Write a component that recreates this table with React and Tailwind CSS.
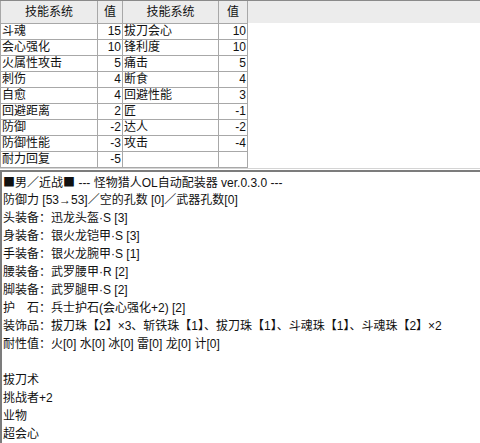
import React from "react";

const skills = [
  ["斗魂", "15", "拔刀会心", "10"],
  ["会心强化", "10", "锋利度", "10"],
  ["火属性攻击", "5", "痛击", "5"],
  ["刺伤", "4", "断食", "4"],
  ["自愈", "4", "回避性能", "3"],
  ["回避距离", "2", "匠", "-1"],
  ["防御", "-2", "达人", "-2"],
  ["防御性能", "-3", "攻击", "-4"],
  ["耐力回复", "-5", "", ""],
];

const lines = [
  "防御力 [53→53]／空的孔数 [0]／武器孔数[0]",
  "头装备：迅龙头盔·S [3]",
  "身装备：银火龙铠甲·S [3]",
  "手装备：银火龙腕甲·S [1]",
  "腰装备：武罗腰甲·R [2]",
  "脚装备：武罗腿甲·S [2]",
  "护　石：兵士护石(会心强化+2) [2]",
  "装饰品：拔刀珠【2】×3、斩铁珠【1】、拔刀珠【1】、斗魂珠【1】、斗魂珠【2】×2",
  "耐性值：火[0] 水[0] 冰[0] 雷[0] 龙[0] 计[0]",
  "",
  "拔刀术",
  "挑战者+2",
  "业物",
  "超会心",
];

const font = { fontFamily: '"Liberation Sans", "Noto Sans CJK SC", sans-serif' };
const cjk = { fontFamily: '"Noto Sans CJK SC", sans-serif' };

export default function App() {
  return (
    <div className="w-[480px] h-[443px] overflow-hidden bg-white text-[12px] text-[#111]" style={font}>
      {/* skill table panel */}
      <div className="flex h-[169px] border-t border-[#8a8a8a] border-b border-b-[#d4d4d4]">
        <table className="border-collapse table-fixed w-[247px] self-start">
          <colgroup>
            <col className="w-[97px]" />
            <col className="w-[25px]" />
            <col className="w-[96px]" />
            <col className="w-[29px]" />
          </colgroup>
          <thead>
            <tr className="h-[22px] bg-[#ececec]">
              <th className="font-normal border-x border-b border-[#a8a8a8] text-center">技能系统</th>
              <th className="font-normal border-x border-b border-[#a8a8a8] text-center">值</th>
              <th className="font-normal border-x border-b border-[#a8a8a8] text-center">技能系统</th>
              <th className="font-normal border-x border-b border-[#a8a8a8] text-center">值</th>
            </tr>
          </thead>
          <tbody>
            {skills.map((r, i) => (
              <tr key={i} className="h-[16px] leading-[15px]">
                <td className="border border-[#a8a8a8] px-[1px] p-0 whitespace-nowrap">{r[0]}</td>
                <td className="border border-[#a8a8a8] px-[1px] p-0 text-right">{r[1]}</td>
                <td className="border border-[#a8a8a8] px-[1px] p-0 whitespace-nowrap">{r[2]}</td>
                <td className="border border-[#a8a8a8] px-[1px] p-0 text-right">{r[3]}</td>
              </tr>
            ))}
          </tbody>
        </table>
        <div className="flex-1">
          <div className="h-[22px] bg-[#ececec]" />
        </div>
      </div>

      {/* result text area */}
      <div className="mt-[1px] border-t-2 border-l-2 border-[#7c7c7c] h-[300px] pl-[1px] pt-[1px]">
        <div className="h-[18px] leading-[18px] whitespace-nowrap">
          <span style={cjk}>■</span>男／近战<span style={cjk}>■</span> --- 怪物猎人OL自动配装器 ver.0.3.0 ---
        </div>
        {lines.map((l, i) => (
          <div key={i} className="h-[18px] leading-[18px] whitespace-nowrap">
            {l || "\u00a0"}
          </div>
        ))}
      </div>
    </div>
  );
}
